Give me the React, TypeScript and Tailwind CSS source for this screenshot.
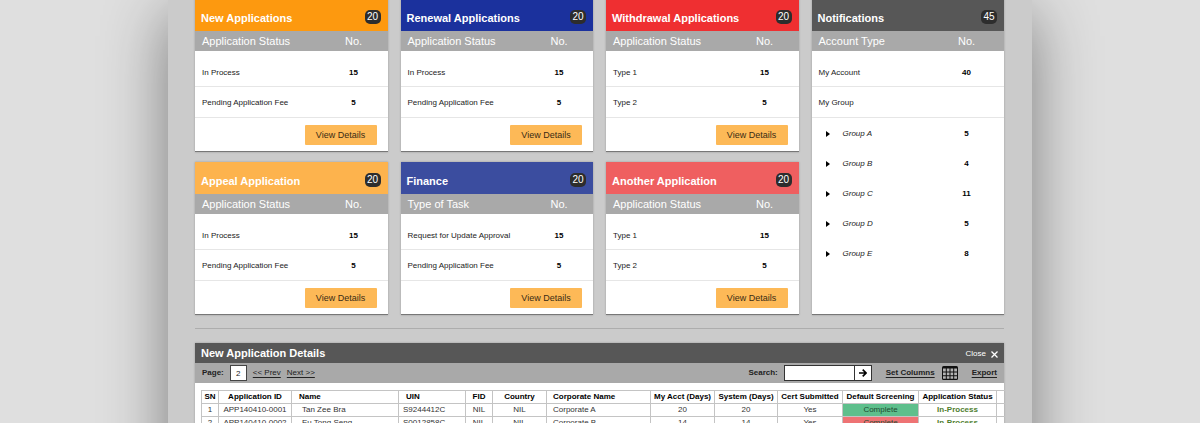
import React from "react";

type Row = { label: string; value: string };

type CardData = {
  title: string;
  color: string;
  heading: string;
  rows: Row[];
};

const cards: CardData[] = [
  {
    title: "New Applications",
    color: "bg-[#fd990f]",
    heading: "Application Status",
    rows: [
      { label: "In Process", value: "15" },
      { label: "Pending Application Fee", value: "5" },
    ],
  },
  {
    title: "Renewal Applications",
    color: "bg-[#1b319d]",
    heading: "Application Status",
    rows: [
      { label: "In Process", value: "15" },
      { label: "Pending Application Fee", value: "5" },
    ],
  },
  {
    title: "Withdrawal Applications",
    color: "bg-[#ef2f31]",
    heading: "Application Status",
    rows: [
      { label: "Type 1", value: "15" },
      { label: "Type 2", value: "5" },
    ],
  },
  {
    title: "Appeal Application",
    color: "bg-[#fdb34d]",
    heading: "Application Status",
    rows: [
      { label: "In Process", value: "15" },
      { label: "Pending Application Fee", value: "5" },
    ],
  },
  {
    title: "Finance",
    color: "bg-[#3b4d9f]",
    heading: "Type of Task",
    rows: [
      { label: "Request for Update Approval", value: "15" },
      { label: "Pending Application Fee", value: "5" },
    ],
  },
  {
    title: "Another Application",
    color: "bg-[#ef5f60]",
    heading: "Application Status",
    rows: [
      { label: "Type 1", value: "15" },
      { label: "Type 2", value: "5" },
    ],
  },
];

const groups: Row[] = [
  { label: "Group A", value: "5" },
  { label: "Group B", value: "4" },
  { label: "Group C", value: "11" },
  { label: "Group D", value: "5" },
  { label: "Group E", value: "8" },
];

function CardHeader({ title, count, color }: { title: string; count: string; color: string }) {
  return (
    <header className={`flex h-8 items-center justify-between pt-1.5 pr-[7px] pl-1.5 text-white ${color}`}>
      <h2 className="text-[11px] leading-3 font-bold">{title}</h2>
      <span className="mb-0.5 flex h-3.5 w-4 items-center justify-center rounded-[5px] bg-[#2d2d2d] text-[10px] leading-3">
        {count}
      </span>
    </header>
  );
}

function TableHead({ heading, valueWidth }: { heading: string; valueWidth: string }) {
  return (
    <thead>
      <tr className="h-5 bg-[#a9a9a9] text-[11px] leading-3 text-white">
        <th scope="col" className="pl-[7px] text-left font-normal">
          {heading}
        </th>
        <th scope="col" className={`text-center font-normal ${valueWidth}`}>
          No.
        </th>
      </tr>
    </thead>
  );
}

function StatusCard({ card }: { card: CardData }) {
  return (
    <section className="border-b border-[#777] bg-white shadow-[0_0_2px_rgba(0,0,0,0.25)]">
      <CardHeader title={card.title} count="20" color={card.color} />
      <table className="w-full border-separate border-spacing-0 text-[8px] leading-3 text-[#222]">
        <TableHead heading={card.heading} valueWidth="w-[68px]" />
        <tbody>
          {card.rows.map((row, i) => (
            <tr key={row.label} className={i === 0 ? "h-9" : "h-[31px]"}>
              <td className={`border-b border-[#e6e6e6] pl-[7px] ${i === 0 ? "pt-2" : "pt-0.5"}`}>{row.label}</td>
              <td
                className={`border-b border-[#e6e6e6] text-center font-bold text-black ${i === 0 ? "pt-2" : "pt-0.5"}`}
              >
                {row.value}
              </td>
            </tr>
          ))}
        </tbody>
      </table>
      <div className="flex justify-end pt-[7px] pr-[11px] pb-1.5">
        <button type="button" className="h-5 w-[72px] rounded-[1px] bg-[#fdb957] text-[9px] leading-3 text-[#3a2c14]">
          View Details
        </button>
      </div>
    </section>
  );
}

function Notifications() {
  return (
    <section className="col-start-4 row-span-2 row-start-1 border-b border-[#777] bg-white shadow-[0_0_2px_rgba(0,0,0,0.25)]">
      <CardHeader title="Notifications" count="45" color="bg-[#575757]" />
      <table className="w-full border-separate border-spacing-0 text-[8px] leading-3 text-[#222]">
        <TableHead heading="Account Type" valueWidth="w-[75px]" />
        <tbody>
          <tr className="h-9">
            <td className="border-b border-[#e6e6e6] pt-2 pl-[7px]">My Account</td>
            <td className="border-b border-[#e6e6e6] pt-2 text-center font-bold text-black">40</td>
          </tr>
          <tr className="h-[31px]">
            <td className="border-b border-[#e6e6e6] pt-0.5 pl-[7px]">My Group</td>
            <td className="border-b border-[#e6e6e6]" />
          </tr>
          {groups.map((group) => (
            <tr key={group.label} className="h-[30px]">
              <td className="pt-0.5 pl-3.5">
                <span className="flex items-center gap-[13px] italic">
                  <svg viewBox="0 0 4 6" className="h-1.5 w-1" aria-hidden="true">
                    <path d="M0 0 L4 3 L0 6 Z" fill="#000" />
                  </svg>
                  {group.label}
                </span>
              </td>
              <td className="pt-0.5 text-center font-bold text-black">{group.value}</td>
            </tr>
          ))}
        </tbody>
      </table>
    </section>
  );
}

const columns = [
  { name: "SN", width: "w-[17px]", align: "text-center" },
  { name: "Application ID", width: "w-[73px]", align: "text-center" },
  { name: "Name", width: "w-[107px]", align: "pl-[7px] text-left" },
  { name: "UIN", width: "w-[67px]", align: "pl-[7px] text-left" },
  { name: "FID", width: "w-[27px]", align: "text-center" },
  { name: "Country", width: "w-[54px]", align: "text-center" },
  { name: "Corporate Name", width: "w-[104px]", align: "pl-1.5 text-left" },
  { name: "My Acct (Days)", width: "w-[64px]", align: "text-center" },
  { name: "System (Days)", width: "w-[63px]", align: "text-center" },
  { name: "Cert Submitted", width: "w-[65px]", align: "text-center" },
  { name: "Default Screening", width: "w-[76px]", align: "text-center" },
  { name: "Application Status", width: "w-[78px]", align: "text-center" },
  { name: "", width: "w-2", align: "" },
];

const cellStyles = [
  "text-center",
  "text-center",
  "pl-2.5",
  "pl-1",
  "text-center",
  "text-center",
  "pl-1.5",
  "text-center",
  "text-center",
  "text-center",
  "text-center text-[#204a30]",
  "text-center font-bold text-[#4e7d2d]",
  "",
];

const records = [
  {
    screening: "bg-[#5ebf8c]",
    cells: ["1", "APP140410-0001", "Tan Zee Bra", "S9244412C", "NIL", "NIL", "Corporate A", "20", "20", "Yes", "Complete", "In-Process", ""],
  },
  {
    screening: "bg-[#ee7374]",
    cells: ["2", "APP140410-0002", "Eu Tong Seng", "S0012858C", "NIL", "NIL", "Corporate B", "14", "14", "Yes", "Complete", "In-Process", ""],
  },
];

function Details() {
  return (
    <section className="mt-3.5 bg-white shadow-[0_0_2px_rgba(0,0,0,0.25)]">
      <header className="flex h-5 items-center justify-between bg-[#575757] px-1.5 text-white">
        <h2 className="text-[11px] leading-3 font-bold">New Application Details</h2>
        <button type="button" className="flex items-center gap-[5px] pt-0.5 text-[8px] leading-3">
          Close
          <svg viewBox="0 0 7 7" className="h-[7px] w-[7px]" aria-hidden="true">
            <path d="M0.5 0.5 L6.5 6.5 M6.5 0.5 L0.5 6.5" stroke="#fff" strokeWidth="1.3" />
          </svg>
        </button>
      </header>
      <div className="flex h-5 items-center bg-[#a9a9a9] px-[7px] text-[8px] leading-3 text-[#222]">
        <label htmlFor="page" className="font-bold">
          Page:
        </label>
        <input
          id="page"
          defaultValue="2"
          className="ml-1.5 h-4 w-[17px] border border-[#444] bg-white text-center text-[8px]"
        />
        <a href="#prev" className="ml-1.5 underline underline-offset-2">
          &lt;&lt; Prev
        </a>
        <a href="#next" className="ml-1.5 underline underline-offset-2">
          Next &gt;&gt;
        </a>
        <form className="ml-auto flex items-center" onSubmit={(e) => e.preventDefault()}>
          <label htmlFor="search" className="font-bold">
            Search:
          </label>
          <input id="search" className="ml-1.5 h-4 w-[71px] border border-[#333] bg-white px-1 text-[8px]" />
          <button
            type="submit"
            aria-label="Search"
            className="-ml-px flex h-4 w-[18px] items-center justify-center border border-[#333] bg-white"
          >
            <svg viewBox="0 0 8 8" className="h-2 w-2" aria-hidden="true">
              <path d="M0 4 H7 M3.7 0.6 L7.1 4 L3.7 7.4" fill="none" stroke="#000" strokeWidth="1.6" />
            </svg>
          </button>
        </form>
        <button type="button" className="ml-3.5 flex items-center gap-[7px] font-bold">
          <span className="underline underline-offset-2">Set Columns</span>
          <svg viewBox="0 0 16 14" className="h-3.5 w-4" aria-hidden="true">
            <rect width="16" height="14" rx="1.5" fill="#111" />
            <g fill="#b4b4b4">
              <path d="M1 2.6h2.8v2.8H1zM4.8 2.6h2.7v2.8H4.8zM8.5 2.6h2.7v2.8H8.5zM12.2 2.6H15v2.8h-2.8z" />
              <path d="M1 6.4h2.8v2.8H1zM4.8 6.4h2.7v2.8H4.8zM8.5 6.4h2.7v2.8H8.5zM12.2 6.4H15v2.8h-2.8z" />
              <path d="M1 10.2h2.8v2.6H1zM4.8 10.2h2.7v2.6H4.8zM8.5 10.2h2.7v2.6H8.5zM12.2 10.2H15v2.6h-2.8z" />
            </g>
          </svg>
        </button>
        <a href="#export" className="ml-3.5 font-bold underline underline-offset-2">
          Export
        </a>
      </div>
      <div className="pt-[7px] pb-24 pl-1.5">
        <table className="w-full table-fixed border-collapse text-[8px] leading-3 whitespace-nowrap text-[#333]">
          <thead>
            <tr className="h-[13px] text-black">
              {columns.map((column, i) => (
                <th
                  key={i}
                  scope="col"
                  className={`border border-[#c4c4c4] p-0 last:border-r-0 ${column.width} ${column.align}`}
                >
                  {column.name}
                </th>
              ))}
            </tr>
          </thead>
          <tbody>
            {records.map((record) => (
              <tr key={record.cells[0]} className="h-[13px]">
                {record.cells.map((cell, i) => (
                  <td
                    key={i}
                    className={`border border-[#c4c4c4] last:border-r-0 ${cellStyles[i]} ${i === 10 ? record.screening : ""}`}
                  >
                    {cell}
                  </td>
                ))}
              </tr>
            ))}
          </tbody>
        </table>
      </div>
    </section>
  );
}

export default function App() {
  return (
    <div className="h-screen overflow-hidden bg-[#dfdfdf] font-['Liberation_Sans',Arial,sans-serif]">
      <main className="mx-auto -mt-px max-w-[864px] bg-[#cbcbcb] pr-7 pb-24 pl-[27px] shadow-[0_16px_60px_rgba(0,0,0,0.45)]">
        <div className="grid grid-cols-4 gap-x-[13px] gap-y-2.5">
          <Notifications />
          {cards.map((card) => (
            <StatusCard key={card.title} card={card} />
          ))}
        </div>
        <hr className="mt-[13px] border-t border-[#adadad]" />
        <Details />
      </main>
    </div>
  );
}
